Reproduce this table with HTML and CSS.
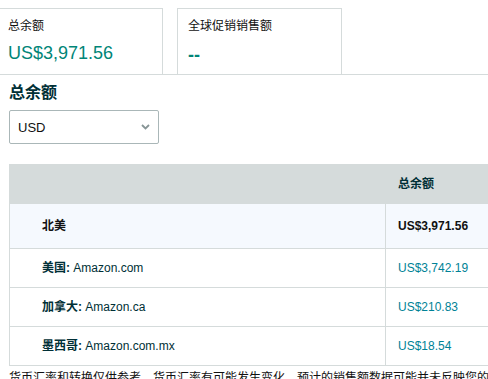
FILE: index.html
```html
<!DOCTYPE html>
<html lang="zh-CN">
<head>
    <meta charset="UTF-8">
    <meta name="viewport" content="width=device-width, initial-scale=1.0">
    <title>总余额</title>
    <link rel="stylesheet" href="styles.css">
</head>
<body>
    <div class="page">
        <div class="summary">
            <div class="tile">
                <div class="tile-label">总余额</div>
                <div class="tile-value">US$3,971.56</div>
            </div>
            <div class="tile">
                <div class="tile-label">全球促销销售额</div>
                <div class="tile-value dash">--</div>
            </div>
        </div>

        <div class="content">
            <h2 class="title">总余额</h2>
            <div class="select">
                <span>USD</span>
                <svg class="chevron" width="9" height="6" viewBox="0 0 9 6">
                    <path d="M1 1 L4.5 4.5 L8 1" fill="none" stroke="#879596" stroke-width="1.8"/>
                </svg>
            </div>

            <table class="balance-table">
                <thead>
                    <tr>
                        <th class="col-market"></th>
                        <th class="col-amount">总余额</th>
                    </tr>
                </thead>
                <tbody>
                    <tr class="region-row">
                        <td class="col-market"><b>北美</b></td>
                        <td class="col-amount"><b>US$3,971.56</b></td>
                    </tr>
                    <tr>
                        <td class="col-market"><b>美国:</b> Amazon.com</td>
                        <td class="col-amount"><span class="link">US$3,742.19</span></td>
                    </tr>
                    <tr>
                        <td class="col-market"><b>加拿大:</b> Amazon.ca</td>
                        <td class="col-amount"><span class="link">US$210.83</span></td>
                    </tr>
                    <tr>
                        <td class="col-market"><b>墨西哥:</b> Amazon.com.mx</td>
                        <td class="col-amount"><span class="link">US$18.54</span></td>
                    </tr>
                </tbody>
            </table>

            <p class="note">货币汇率和转换仅供参考。货币汇率有可能发生变化，预计的销售额数据可能并未反映您的实际收入。</p>
        </div>
    </div>
</body>
</html>
```

FILE: styles.css
```css
* { box-sizing: border-box; }
html, body {
    margin: 0;
    padding: 0;
    overflow: hidden;
}
body {
    font-family: "Liberation Sans", "Noto Sans CJK SC", sans-serif;
    font-size: 12px;
    color: #111111;
    background: #ffffff;
}
.page {
    width: 488px;
    overflow: hidden;
}
.summary {
    display: flex;
    gap: 14px;
    margin-left: -3px;
    padding-top: 8px;
    border-bottom: 1px solid #d5dbdb;
}
.tile {
    width: 166px;
    height: 66px;
    border: 1px solid #d5dbdb;
    border-bottom: none;
    padding: 9px 10px 0;
}
.tile + .tile { width: 165px; }
.tile-label {
    font-size: 12px;
    line-height: 16px;
    color: #111111;
}
.tile-value {
    margin-top: 8px;
    font-size: 18px;
    line-height: 22px;
    color: #008577;
}
.tile-value.dash {
    font-weight: bold;
    margin-top: 10px;
}
.content { padding-left: 9px; }
.title {
    margin: 8px 0 0;
    font-size: 16px;
    line-height: 20px;
    font-weight: bold;
    color: #002f36;
}
.select {
    margin-top: 7px;
    width: 150px;
    height: 34px;
    border: 1px solid #aab7b8;
    border-radius: 2px;
    padding: 0 8px;
    display: flex;
    align-items: center;
    justify-content: space-between;
    font-size: 13px;
    color: #111111;
}
.balance-table {
    margin-top: 20px;
    width: 520px;
    border-collapse: collapse;
    border: 1px solid #d5dbdb;
    font-size: 12px;
    line-height: 16px;
}
.balance-table th,
.balance-table td {
    border-top: 1px solid #d5dbdb;
    border-bottom: 1px solid #d5dbdb;
    height: 39px;
    padding: 0 12px;
    text-align: left;
    vertical-align: middle;
}
.balance-table th {
    background: #d5dbdb;
    color: #002f36;
    font-weight: bold;
}
.balance-table .col-market {
    width: 376px;
    padding-left: 32px;
    color: #002f36;
}
.balance-table .col-amount {
    border-left: 1px solid #d5dbdb;
}
.region-row td {
    height: 45px;
    background: #f5f9fe;
}
.region-row b { color: #111111; }
.link { color: #008296; }
.note {
    margin: 4px 0 0;
    font-size: 12px;
    line-height: 16px;
    color: #111111;
    white-space: nowrap;
}
```
